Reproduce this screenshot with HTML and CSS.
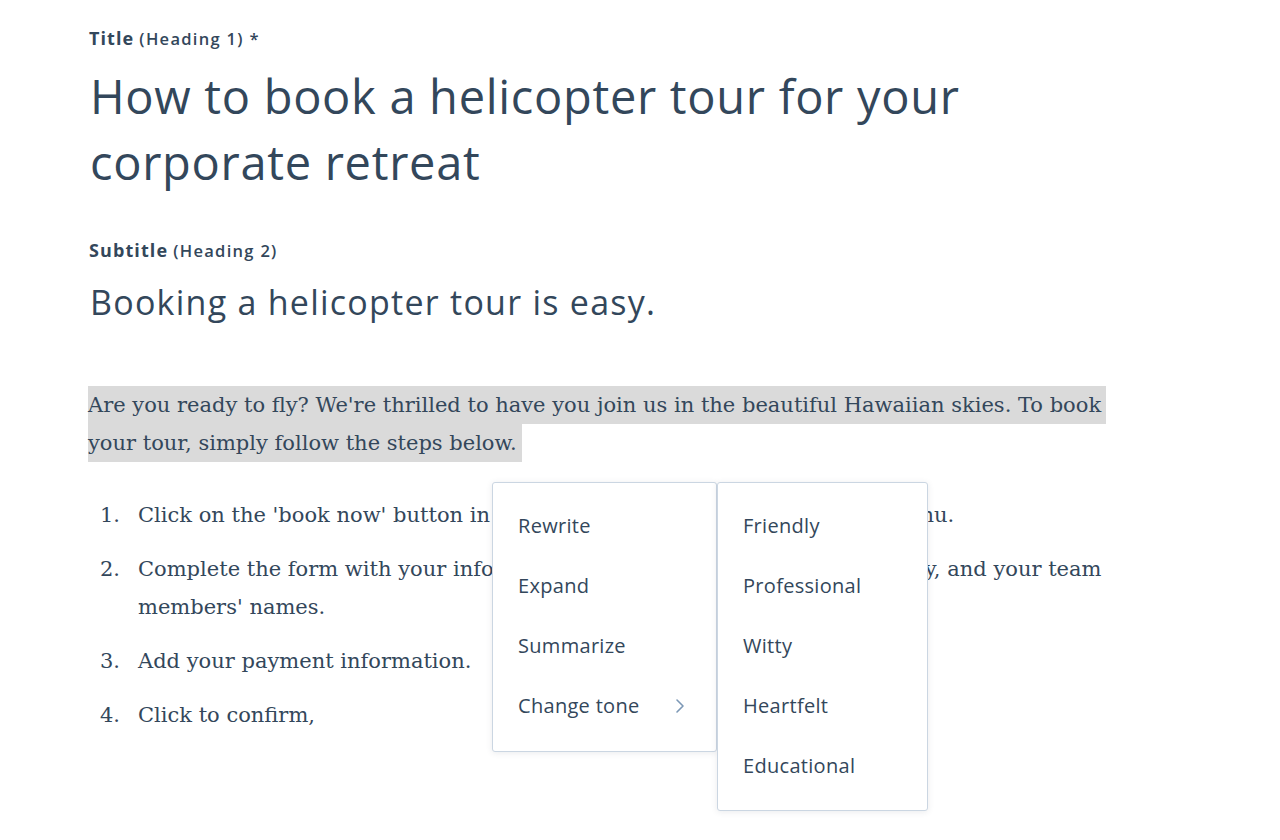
FILE: index.html
```html
<!DOCTYPE html>
<html lang="en">
<head>
<meta charset="utf-8">
<title>Blog editor</title>
<link rel="stylesheet" href="styles.css">
</head>
<body>
<main class="editor">
  <div class="field-label"><span class="label-main">Title</span> <span class="label-sub">(Heading 1) *</span></div>
  <h1 class="title">How to book a helicopter tour for your corporate retreat</h1>

  <div class="field-label sub-label"><span class="label-main">Subtitle</span> <span class="label-sub">(Heading 2)</span></div>
  <h2 class="subtitle">Booking a helicopter tour is easy.</h2>

  <div class="body-wrap">
    <p class="intro"><span class="hl">Are you ready to fly? We're thrilled to have you join us in the beautiful Hawaiian skies. To book your tour, simply follow the steps below.</span></p>

    <ol class="steps">
      <li>Click on the 'book now' button in the top right-hand corner of the site menu.</li>
      <li>Complete the form with your information, including the day, your company, and your team members' names.</li>
      <li>Add your payment information.</li>
      <li>Click to confirm,</li>
    </ol>

    <div class="menu menu-main">
      <div class="menu-item">Rewrite</div>
      <div class="menu-item">Expand</div>
      <div class="menu-item">Summarize</div>
      <div class="menu-item has-sub">Change tone
        <svg class="chev" width="10" height="16" viewBox="0 0 10 16"><path d="M2 2 L8 8 L2 14" fill="none" stroke="#7c98b6" stroke-width="1.6" stroke-linecap="round" stroke-linejoin="round"/></svg>
      </div>
    </div>
    <div class="menu menu-tone">
      <div class="menu-item">Friendly</div>
      <div class="menu-item">Professional</div>
      <div class="menu-item">Witty</div>
      <div class="menu-item">Heartfelt</div>
      <div class="menu-item">Educational</div>
    </div>
  </div>
</main>
</body>
</html>
```
FILE: styles.css
```css
html, body {
  margin: 0;
  padding: 0;
  background: #ffffff;
  min-height: 840px;
}
body {
  color: #33475b;
  font-family: "Open Sans", "DejaVu Sans", sans-serif;
}
.editor {
  padding: 24px 0 0 89px;
  width: 1100px;
  min-height: 816px;
}
.field-label {
  display: flex;
  align-items: baseline;
  gap: 5px;
  height: 28px;
  line-height: 28px;
}
.label-main {
  font-weight: 700;
  font-size: 18px;
  letter-spacing: 1.1px;
}
.label-sub {
  font-weight: 600;
  font-size: 16.5px;
  letter-spacing: 1.3px;
}
.title {
  margin: 11px 0 0 1px;
  width: 900px;
  font-weight: 400;
  font-size: 47px;
  line-height: 66px;
  letter-spacing: 0.7px;
}
.sub-label {
  margin-top: 41px;
}
.subtitle {
  margin: 18px 0 0 1px;
  font-weight: 400;
  font-size: 34px;
  line-height: 40px;
  letter-spacing: 1.25px;
}
.body-wrap {
  position: relative;
  margin-top: 64px;
  margin-left: -1px;
}
.intro {
  margin: 0;
  width: 1030px;
  font-family: "DejaVu Serif", Georgia, serif;
  font-size: 21px;
  line-height: 38px;
}
.hl {
  background: #dadada;
  padding: 7px 5px 7px 0;
  -webkit-box-decoration-break: clone;
  box-decoration-break: clone;
}
.steps {
  margin: 34px 0 0;
  padding: 0;
  list-style: none;
  counter-reset: step;
  width: 1040px;
  font-family: "DejaVu Serif", Georgia, serif;
  font-size: 21px;
  line-height: 38px;
}
.steps li {
  display: flex;
  counter-increment: step;
  margin-bottom: 16px;
}
.steps li::before {
  content: counter(step) ".";
  flex: 0 0 50px;
  box-sizing: border-box;
  padding-right: 18px;
  text-align: right;
}
.menu {
  position: absolute;
  background: #ffffff;
  border: 1px solid #cbd6e2;
  border-radius: 3px;
  box-shadow: 0 1px 6px rgba(45, 62, 80, 0.10);
  padding: 13px 0 0;
  font-family: "Open Sans", "DejaVu Sans", sans-serif;
  font-size: 20px;
  letter-spacing: 0.3px;
  box-sizing: border-box;
}
.menu-main {
  left: 404px;
  top: 96px;
  width: 225px;
  height: 270px;
}
.menu-tone {
  left: 629px;
  top: 96px;
  width: 211px;
  height: 329px;
}
.menu-item {
  display: flex;
  align-items: center;
  height: 60px;
  padding: 0 25px;
  line-height: 60px;
  box-sizing: border-box;
}
.has-sub {
  justify-content: space-between;
}
.chev {
  margin-right: 6px;
}
```
